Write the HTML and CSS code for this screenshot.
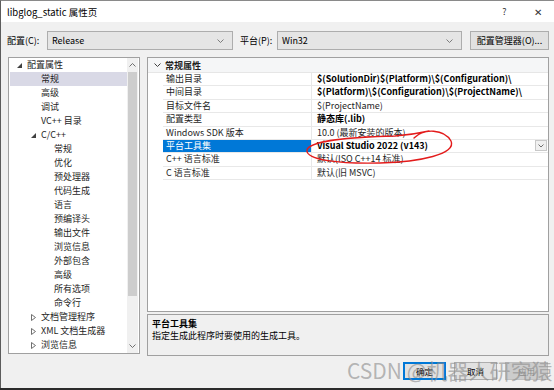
FILE: index.html
```html
<!DOCTYPE html>
<html lang="zh">
<head>
<meta charset="utf-8">
<title>libglog_static 属性页</title>
<link rel="stylesheet" href="styles.css">
</head>
<body>
<div class="window">
  <div class="titlebar">
    <span class="title">libglog_static 属性页</span>
    <span class="tb-btns"><span class="tb-help">?</span><span class="tb-close">✕</span></span>
  </div>
  <div class="config-row">
    <span class="lbl">配置(C):</span>
    <div class="combo combo-cfg"><span>Release</span><svg class="chev" width="7" height="4" viewBox="0 0 7 4"><path d="M0.5 0.5 L3.5 3.5 L6.5 0.5" fill="none" stroke="#707070" stroke-width="0.9"/></svg></div>
    <span class="lbl lbl-plat">平台(P):</span>
    <div class="combo combo-plat"><span>Win32</span><svg class="chev" width="7" height="4" viewBox="0 0 7 4"><path d="M0.5 0.5 L3.5 3.5 L6.5 0.5" fill="none" stroke="#707070" stroke-width="0.9"/></svg></div>
    <button class="btn btn-mgr">配置管理器(O)...</button>
  </div>
  <div class="main">
    <div class="tree">
      <ul class="tree-list">
        <li class="row lv0"><span class="arr"><svg width="5" height="5" viewBox="0 0 5 5"><path d="M5 0 L5 5 L0 5 Z" fill="#404040"/></svg></span>配置属性</li>
        <li class="row lv1 sel"><span class="arr"></span>常规</li>
        <li class="row lv1"><span class="arr"></span>高级</li>
        <li class="row lv1"><span class="arr"></span>调试</li>
        <li class="row lv1"><span class="arr"></span>VC++ 目录</li>
        <li class="row lv1"><span class="arr"><svg width="5" height="5" viewBox="0 0 5 5"><path d="M5 0 L5 5 L0 5 Z" fill="#404040"/></svg></span>C/C++</li>
        <li class="row lv2"><span class="arr"></span>常规</li>
        <li class="row lv2"><span class="arr"></span>优化</li>
        <li class="row lv2"><span class="arr"></span>预处理器</li>
        <li class="row lv2"><span class="arr"></span>代码生成</li>
        <li class="row lv2"><span class="arr"></span>语言</li>
        <li class="row lv2"><span class="arr"></span>预编译头</li>
        <li class="row lv2"><span class="arr"></span>输出文件</li>
        <li class="row lv2"><span class="arr"></span>浏览信息</li>
        <li class="row lv2"><span class="arr"></span>外部包含</li>
        <li class="row lv2"><span class="arr"></span>高级</li>
        <li class="row lv2"><span class="arr"></span>所有选项</li>
        <li class="row lv2"><span class="arr"></span>命令行</li>
        <li class="row lv1"><span class="arr"><svg width="5" height="7" viewBox="0 0 5 7"><path d="M0.5 0.5 L4.5 3.5 L0.5 6.5 Z" fill="none" stroke="#606060" stroke-width="0.9"/></svg></span>文档管理程序</li>
        <li class="row lv1"><span class="arr"><svg width="5" height="7" viewBox="0 0 5 7"><path d="M0.5 0.5 L4.5 3.5 L0.5 6.5 Z" fill="none" stroke="#606060" stroke-width="0.9"/></svg></span>XML 文档生成器</li>
        <li class="row lv1"><span class="arr"><svg width="5" height="7" viewBox="0 0 5 7"><path d="M0.5 0.5 L4.5 3.5 L0.5 6.5 Z" fill="none" stroke="#606060" stroke-width="0.9"/></svg></span>浏览信息</li>
      </ul>
      <div class="scrollbar">
        <div class="sb-arrow"><svg width="7" height="4" viewBox="0 0 7 4"><path d="M0.5 3.5 L3.5 0.5 L6.5 3.5" fill="none" stroke="#606060" stroke-width="0.9"/></svg></div>
        <div class="sb-track"><div class="sb-thumb"></div></div>
        <div class="sb-arrow"><svg width="7" height="4" viewBox="0 0 7 4"><path d="M0.5 0.5 L3.5 3.5 L6.5 0.5" fill="none" stroke="#606060" stroke-width="0.9"/></svg></div>
      </div>
    </div>
    <div class="right">
      <div class="grid">
        <div class="grid-header">
          <span class="gh-chev"><svg width="7" height="4" viewBox="0 0 7 4"><path d="M0.5 0.5 L3.5 3.5 L6.5 0.5" fill="none" stroke="#404040" stroke-width="1"/></svg></span>
          <span class="gh-title">常规属性</span>
        </div>
        <div class="grid-body">
          <div class="prow"><span class="pname">输出目录</span><span class="pval b">$(SolutionDir)$(Platform)\$(Configuration)\</span></div>
          <div class="prow"><span class="pname">中间目录</span><span class="pval b">$(Platform)\$(Configuration)\$(ProjectName)\</span></div>
          <div class="prow"><span class="pname">目标文件名</span><span class="pval">$(ProjectName)</span></div>
          <div class="prow"><span class="pname">配置类型</span><span class="pval b">静态库(.lib)</span></div>
          <div class="prow"><span class="pname">Windows SDK 版本</span><span class="pval">10.0 (最新安装的版本)</span></div>
          <div class="prow psel"><span class="pname">平台工具集</span><span class="pval b">Visual Studio 2022 (v143)</span><span class="pdd"><svg width="6" height="4" viewBox="0 0 6 4"><path d="M0.5 0.5 L3 3 L5.5 0.5" fill="none" stroke="#606060" stroke-width="0.9"/></svg></span></div>
          <div class="prow"><span class="pname">C++ 语言标准</span><span class="pval">默认(ISO C++14 标准)</span></div>
          <div class="prow"><span class="pname">C 语言标准</span><span class="pval">默认(旧 MSVC)</span></div>
        </div>
      </div>
      <div class="desc">
        <div class="desc-title">平台工具集</div>
        <div class="desc-text">指定生成此程序时要使用的生成工具。</div>
      </div>
    </div>
  </div>
  <div class="footer">
    <button class="btn btn-ok">确定</button>
    <button class="btn">取消</button>
    <button class="btn btn-dis">应用</button>
  </div>
</div>
<div class="taskbar"></div>
<svg class="annot" width="554" height="390" viewBox="0 0 554 390">
  <path d="M414 138 C424 128 444 129 451 141 C457 154 420 162 380 163 C340 164 305 160 307 150 C309 141 350 137 395 136 C410 135 420 133 429 131" fill="none" stroke="#e31b1b" stroke-width="1.4" stroke-linecap="round"/>
</svg>
<div class="watermark">CSDN @机器人研究猿</div>
</body>
</html>
```
FILE: styles.css
```css
* { box-sizing: border-box; }
html, body { margin: 0; padding: 0; }
body {
  width: 554px;
  height: 390px;
  overflow: hidden;
  position: relative;
  background: #f0f0f0;
  font-family: "Noto Sans CJK SC", "Noto Sans", sans-serif;
  font-size: 9px;
  color: #000;
}
ul { list-style: none; margin: 0; padding: 0; }

.window {
  height: 388px;
  border-left: 1px solid #5c5c5c;
  border-top: 1px solid #8a8a8a;
  display: flex;
  flex-direction: column;
}

.titlebar {
  height: 21px;
  background: #fff;
  display: flex;
  align-items: center;
  justify-content: space-between;
  padding-left: 6px;
}
.title { font-size: 9.5px; }
.tb-btns { display: flex; align-items: center; }
.tb-help { width: 33px; text-align: center; font-size: 9px; color: #333; }
.tb-close { width: 33px; text-align: center; font-size: 10px; color: #333; }

.config-row {
  display: flex;
  align-items: center;
  height: 19px;
  margin-top: 9px;
  margin-bottom: 7px;
  padding-left: 6px;
}
.lbl { width: 40px; }
.lbl-plat { margin-left: 7px; width: 37px; }
.combo {
  height: 19px;
  background: #e5e5e5;
  border: 1px solid #adadad;
  display: flex;
  align-items: center;
  justify-content: space-between;
  padding: 0 8px 0 4px;
}
.combo-cfg { width: 186px; }
.combo-plat { width: 185px; }
.btn {
  font-family: inherit;
  font-size: 9px;
  height: 19px;
  background: #e1e1e1;
  border: 1px solid #adadad;
  padding: 0;
  color: #000;
}
.btn-mgr { width: 79px; margin-left: 8px; }

.main {
  display: flex;
  height: 299px;
  padding-left: 7px;
}
.tree {
  width: 132px;
  height: 297px;
  border: 1px solid #a0a0a0;
  background: #fff;
  display: flex;
  padding-left: 1px;
}
.tree-list { flex: 1; overflow: hidden; }
.row {
  height: 14px;
  line-height: 14px;
  display: flex;
  align-items: center;
  white-space: nowrap;
  color: #1e1e1e;
}
.row.lv0 { padding-left: 7px; }
.row.lv1 { padding-left: 21px; }
.row.lv2 { padding-left: 34px; }
.row.sel { background: #d9d9e6; }
.arr { width: 10px; display: flex; align-items: center; }

.scrollbar {
  width: 11px;
  display: flex;
  flex-direction: column;
  background: #f0f0f0;
  margin-right: 1px;
}
.sb-arrow { height: 14px; display: flex; align-items: center; justify-content: center; }
.sb-track { flex: 1; padding: 0 1px; }
.sb-thumb { height: 224px; background: #cdcdcd; }

.right {
  margin-left: 7px;
  width: 402px;
  display: flex;
  flex-direction: column;
  gap: 2px;
}
.grid {
  height: 255px;
  border: 1px solid #a0a0a0;
  background: #fff;
}
.grid-header {
  height: 15px;
  display: flex;
  align-items: center;
  background: #f5f6f7;
  border-bottom: 1px solid #e6e6e6;
}
.gh-chev { width: 17px; display: flex; justify-content: center; padding-left: 2px; }
.gh-title { font-weight: bold; color: #1e1e1e; }
.grid-body { padding-left: 15px; }
.prow {
  height: 13.4px;
  display: flex;
  align-items: stretch;
  border-bottom: 1px solid #e8e8e8;
  line-height: 12.4px;
  white-space: nowrap;
}
.pname {
  width: 149px;
  padding-left: 3px;
  border-right: 1px solid #e8e8e8;
  color: #1e1e1e;
}
.pval { flex: 1; padding-left: 5px; color: #1e1e1e; overflow: hidden; }
.pval.b { font-weight: bold; color: #000; }
.psel .pname { background: #0078d7; color: #fff; }
.pdd {
  width: 12px;
  margin: 0 1px 1px 0;
  border: 1px solid #c8c8c8;
  background: #f0f0f0;
  display: flex;
  align-items: center;
  justify-content: center;
}

.desc {
  height: 42px;
  border: 1px solid #a0a0a0;
  background: #f0f0f0;
  padding: 3px 4px;
  line-height: 12px;
}
.desc-title { font-weight: bold; }

.footer {
  display: flex;
  justify-content: flex-end;
  gap: 8px;
  padding-top: 6px;
  padding-right: 6px;
}
.footer .btn { width: 43px; height: 18px; font-size: 8.5px; }
.btn-ok { border: 1px solid #0078d7; box-shadow: inset 0 0 0 1px #0078d7; }
.btn-dis { background: #cccccc; border-color: #bfbfbf; color: #8c8c8c; }

.taskbar { height: 2px; background: #2b2b2b; }

.annot { position: absolute; left: 0; top: 0; pointer-events: none; }
.watermark {
  position: absolute;
  left: 347px;
  top: 355px;
  font-size: 21px;
  line-height: 30px;
  color: rgba(140, 140, 140, 0.62);
  white-space: nowrap;
  font-family: "Noto Sans CJK SC", sans-serif;
  pointer-events: none;
}
```
